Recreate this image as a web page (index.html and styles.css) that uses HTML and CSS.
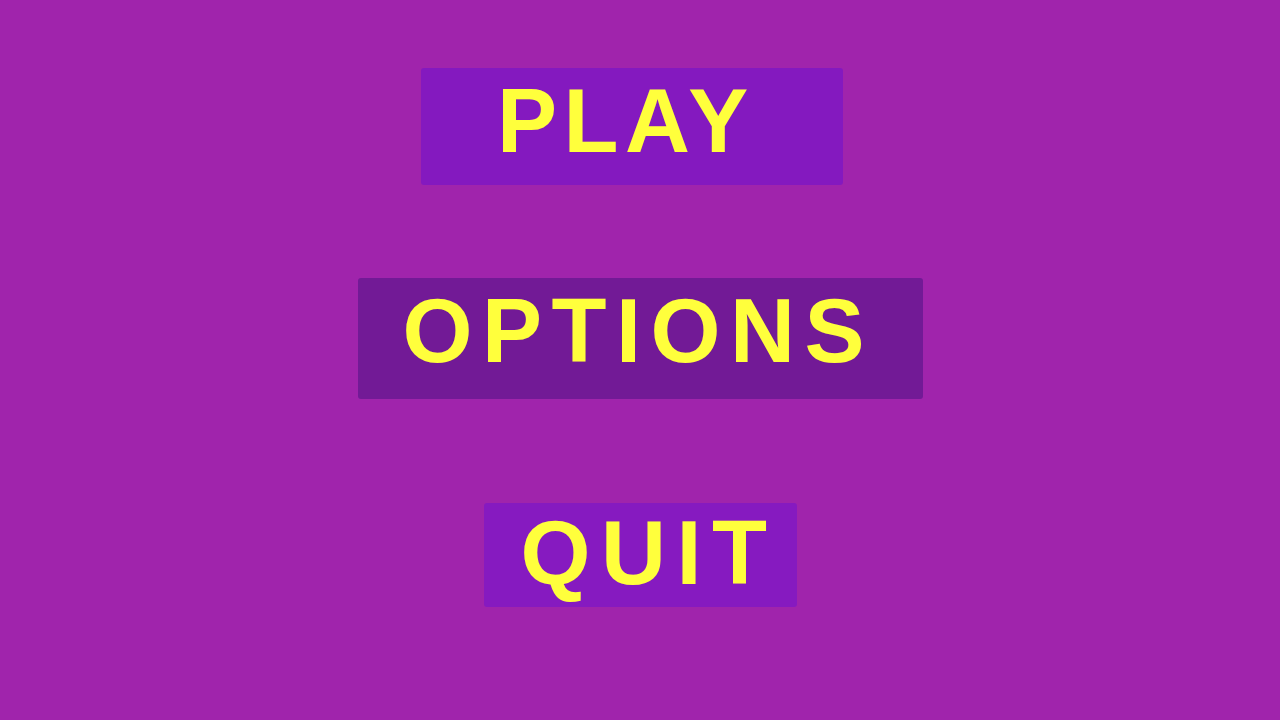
FILE: index.html
```html
<!DOCTYPE html>
<html>
<head>
<meta charset="utf-8">
<title>Menu</title>
<link rel="stylesheet" href="styles.css">
</head>
<body>
<main class="menu">
  <button class="btn btn-play">PLAY</button>
  <button class="btn btn-options">OPTIONS</button>
  <button class="btn btn-quit">QUIT</button>
</main>
</body>
</html>
```
FILE: styles.css
```css
html, body {
  margin: 0;
  padding: 0;
  width: 1280px;
  height: 720px;
  background: #a024ac;
  overflow: hidden;
}
.menu {
  display: flex;
  flex-direction: column;
  align-items: center;
  padding-top: 68px;
}
.btn {
  display: block;
  box-sizing: border-box;
  border: none;
  margin: 0;
  font-family: "Liberation Sans", Arial, sans-serif;
  font-size: 90px;
  line-height: 90px;
  font-weight: 700;
  letter-spacing: 10.5px;
  color: #ffff3c;
  border-radius: 3px;
  cursor: pointer;
  text-align: left;
  white-space: nowrap;
  padding-right: 0;
}
.btn-play {
  background: #8419bf;
  width: 422px;
  padding-top: 8px;
  padding-bottom: 19px;
  padding-left: 76px;
  letter-spacing: 6.5px;
  margin-right: 16px;
}
.btn-options {
  background: #721a96;
  width: 565px;
  padding-top: 8px;
  padding-bottom: 23px;
  padding-left: 45px;
  letter-spacing: 9.5px;
  margin-top: 93px;
}
.btn-quit {
  background: #861ac0;
  width: 313px;
  padding-top: 5px;
  padding-bottom: 9px;
  padding-left: 37px;
  margin-top: 104px;
}
```
